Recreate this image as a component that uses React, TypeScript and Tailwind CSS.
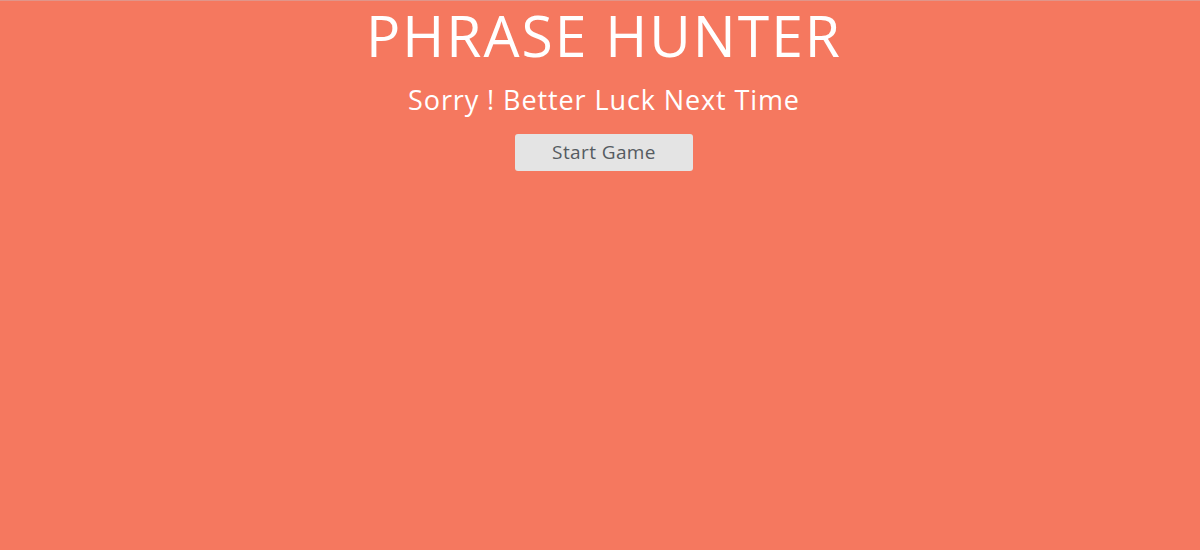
export default function App() {
  return (
    <div className="w-[1200px] h-[550px] bg-[#f5785f] flex flex-col items-center text-white pl-[8px] border-t border-[#e0958a]" style={{ fontFamily: '"Open Sans", "Noto Sans", sans-serif' }}>
      <h1 className="text-[57px] leading-[68px] mt-0 tracking-[2px]">PHRASE HUNTER</h1>
      <h2 className="text-[27px] leading-[36px] mt-[13px] font-medium tracking-[0.9px]">Sorry ! Better Luck Next Time</h2>
      <button className="mt-[16px] w-[178px] h-[37px] bg-[#e4e4e4] rounded-[3px] text-[#555b61] text-[19px] tracking-[0.4px]">Start Game</button>
    </div>
  );
}
